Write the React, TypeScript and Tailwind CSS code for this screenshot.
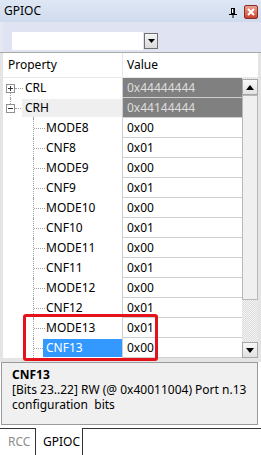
import React from "react";

type Row = {
  name: string;
  value: string;
  level: 0 | 1;
  sign?: "+" | "-";
  dark?: boolean;
  selected?: boolean;
  greyName?: boolean;
};

const rows: Row[] = [
  { name: "CRL", value: "0x44444444", level: 0, sign: "+", dark: true },
  { name: "CRH", value: "0x44144444", level: 0, sign: "-", dark: true, greyName: true },
  { name: "MODE8", value: "0x00", level: 1 },
  { name: "CNF8", value: "0x01", level: 1 },
  { name: "MODE9", value: "0x00", level: 1 },
  { name: "CNF9", value: "0x01", level: 1 },
  { name: "MODE10", value: "0x00", level: 1 },
  { name: "CNF10", value: "0x01", level: 1 },
  { name: "MODE11", value: "0x00", level: 1 },
  { name: "CNF11", value: "0x01", level: 1 },
  { name: "MODE12", value: "0x00", level: 1 },
  { name: "CNF12", value: "0x01", level: 1 },
  { name: "MODE13", value: "0x01", level: 1 },
  { name: "CNF13", value: "0x00", level: 1, selected: true },
];

const FONT = { fontFamily: '"Noto Sans", "Open Sans", sans-serif' };

function PlusMinus({ sign }: { sign: "+" | "-" }) {
  return (
    <svg width="9" height="9" viewBox="0 0 9 9" className="absolute left-[3px] top-[6px]">
      <rect x="0.5" y="0.5" width="8" height="8" fill="#fff" stroke="#919191" />
      <line x1="2" y1="4.5" x2="7" y2="4.5" stroke="#333" />
      {sign === "+" && <line x1="4.5" y1="2" x2="4.5" y2="7" stroke="#333" />}
    </svg>
  );
}

function TreeRow({ r, idx }: { r: Row; idx: number }) {
  return (
    <div className="flex h-[20px]">
      <div className="relative w-[119px] h-full">
        {r.level === 0 ? (
          <>
            {idx === 0 && (
              <div className="absolute left-[7px] top-[15px] h-[5px] border-l border-dotted border-[#a0a0a0]" />
            )}
            {idx === 1 && (
              <div className="absolute left-[7px] top-0 h-[6px] border-l border-dotted border-[#a0a0a0]" />
            )}
            {idx === 1 && (
              <div className="absolute left-[30px] top-[15px] h-[5px] border-l border-dotted border-[#a0a0a0]" />
            )}
            <PlusMinus sign={r.sign!} />
            <div className="absolute left-[12px] top-[10px] w-[8px] border-t border-dotted border-[#a0a0a0]" />
            <div
              className={
                "absolute left-[19px] top-[1px] h-[18px] right-0 flex items-center pl-[3px] text-[12px] text-black " +
                (r.greyName ? "bg-[#efefef]" : "")
              }
            >
              {r.name}
            </div>
          </>
        ) : (
          <>
            <div className="absolute left-[30px] top-0 h-[20px] border-l border-dotted border-[#a0a0a0]" />
            <div className="absolute left-[31px] top-[10px] w-[11px] border-t border-dotted border-[#a0a0a0]" />
            <div
              className={
                "absolute left-[40px] top-[1px] h-[18px] right-0 flex items-center pl-[3px] text-[12px] " +
                (r.selected ? "bg-[#3399ff] text-white" : "text-black")
              }
            >
              {r.name}
            </div>
          </>
        )}
      </div>
      <div
        className={
          "w-[120px] h-full border-l border-b border-[#cfcfcf] flex items-center pl-[4px] text-[12px] " +
          (r.dark ? "bg-[#808080] text-[#dedede]" : "bg-white text-black")
        }
      >
        {r.value}
      </div>
    </div>
  );
}

function ScrollBtn({ up }: { up: boolean }) {
  return (
    <div className="w-[16px] h-[16px] border border-[#a8a8a8] bg-gradient-to-b from-[#f8f8f8] to-[#e2e2e2] flex items-center justify-center">
      <svg width="8" height="5" viewBox="0 0 8 5">
        {up ? <polygon points="0,5 8,5 4,0" fill="#000" /> : <polygon points="0,0 8,0 4,5" fill="#000" />}
      </svg>
    </div>
  );
}

export default function App() {
  return (
    <div className="relative w-[261px] h-[455px] bg-white overflow-hidden" style={FONT}>
      {/* Title bar */}
      <div className="h-[22px] flex items-center bg-gradient-to-b from-[#dfe7f4] to-[#cfdbed] pl-[4px] pr-[3px]">
        <span className="text-[12px] text-black">GPIOC</span>
        <div className="flex-1" />
        <svg width="8" height="10" viewBox="0 0 8 10" className="mr-[7px] mt-[3px]">
          <rect x="2.5" y="0.5" width="3" height="5" fill="#fff" stroke="#000" />
          <line x1="5" y1="0" x2="5" y2="6" stroke="#000" strokeWidth="1.5" />
          <line x1="0" y1="6.5" x2="8" y2="6.5" stroke="#000" />
          <line x1="4" y1="7" x2="4" y2="10" stroke="#000" />
        </svg>
        <div className="w-[14px] h-[14px] mt-[2px] rounded-[2px] border border-[#8b2d22] bg-gradient-to-b from-[#eaa293] to-[#c8402f] flex items-center justify-center">
          <svg width="8" height="8" viewBox="0 0 8 8">
            <path d="M1 1 L7 7 M7 1 L1 7" stroke="#fff" strokeWidth="2" />
          </svg>
        </div>
      </div>

      {/* Toolbar */}
      <div className="h-[30px] bg-[#dfe3f2] border-l-[3px] border-[#e6e9f3] pl-[9px] pt-[10px] flex items-start">
        <div className="w-[131px] h-[18px] bg-white" />
        <div className="ml-[1px] mt-[1px] w-[14px] h-[16px] border border-[#707070] bg-gradient-to-b from-[#f4f4f4] to-[#dadada] flex items-center justify-center">
          <svg width="7" height="4" viewBox="0 0 7 4">
            <polygon points="0,0 7,0 3.5,4" fill="#000" />
          </svg>
        </div>
      </div>

      {/* Grid */}
      <div className="h-[310px] bg-[#e4e4e4] border-t border-[#a9a9a9] px-[3px] flex flex-col">
        <div className="w-[255px] h-[25px] bg-white flex items-center text-[12px] text-black border-b border-[#e8e8e8]">
          <div className="w-[119px] pl-[5px]">Property</div>
          <div className="h-full border-l border-[#e6e6e6]" />
          <div className="pl-[4px]">Value</div>
        </div>
        <div className="flex w-[255px] bg-white">
          <div className="w-[239px]">
            {rows.map((r, i) => (
              <TreeRow key={r.name} r={r} idx={i} />
            ))}
          </div>
          <div className="w-[16px] flex flex-col pt-[1px] bg-[repeating-conic-gradient(#dcdcdc_0_25%,#f4f4f4_0_50%)] bg-[length:2px_2px]">
            <ScrollBtn up />
            <div className="w-[16px] h-[205px] border border-[#b8b8b8] bg-[#f0f0f0]" />
            <div className="flex-1" />
            <ScrollBtn up={false} />
          </div>
        </div>
      </div>

      {/* Description panel */}
      <div className="h-[63px] mx-[1px] mr-[3px] border border-[#9a9a9a] bg-[#f0f0f0] px-[10px] pt-[4px] text-[12px] leading-[15px] text-black">
        <div className="font-bold">CNF13</div>
        <div className="whitespace-nowrap">[Bits 23..22] RW (@ 0x40011004) Port n.13</div>
        <div className="whitespace-pre">configuration  bits</div>
      </div>

      {/* Tabs */}
      <div className="flex h-[30px] pt-[3px] items-stretch">
        <div className="w-[35px] border-t border-[#333] flex items-center pl-[8px] text-[12px] text-[#8c8c8c]">RCC</div>
        <div className="w-[48px] border-l border-r border-[#333] bg-white flex items-center pl-[7px] text-[12px] text-black">
          GPIOC
        </div>
        <div className="flex-1 border-t border-[#333]" />
      </div>

      {/* Red highlight */}
      <div className="absolute left-[23px] top-[314px] w-[135px] h-[47px] border-[3px] border-[#e3121b] rounded-[3px]" />
    </div>
  );
}
